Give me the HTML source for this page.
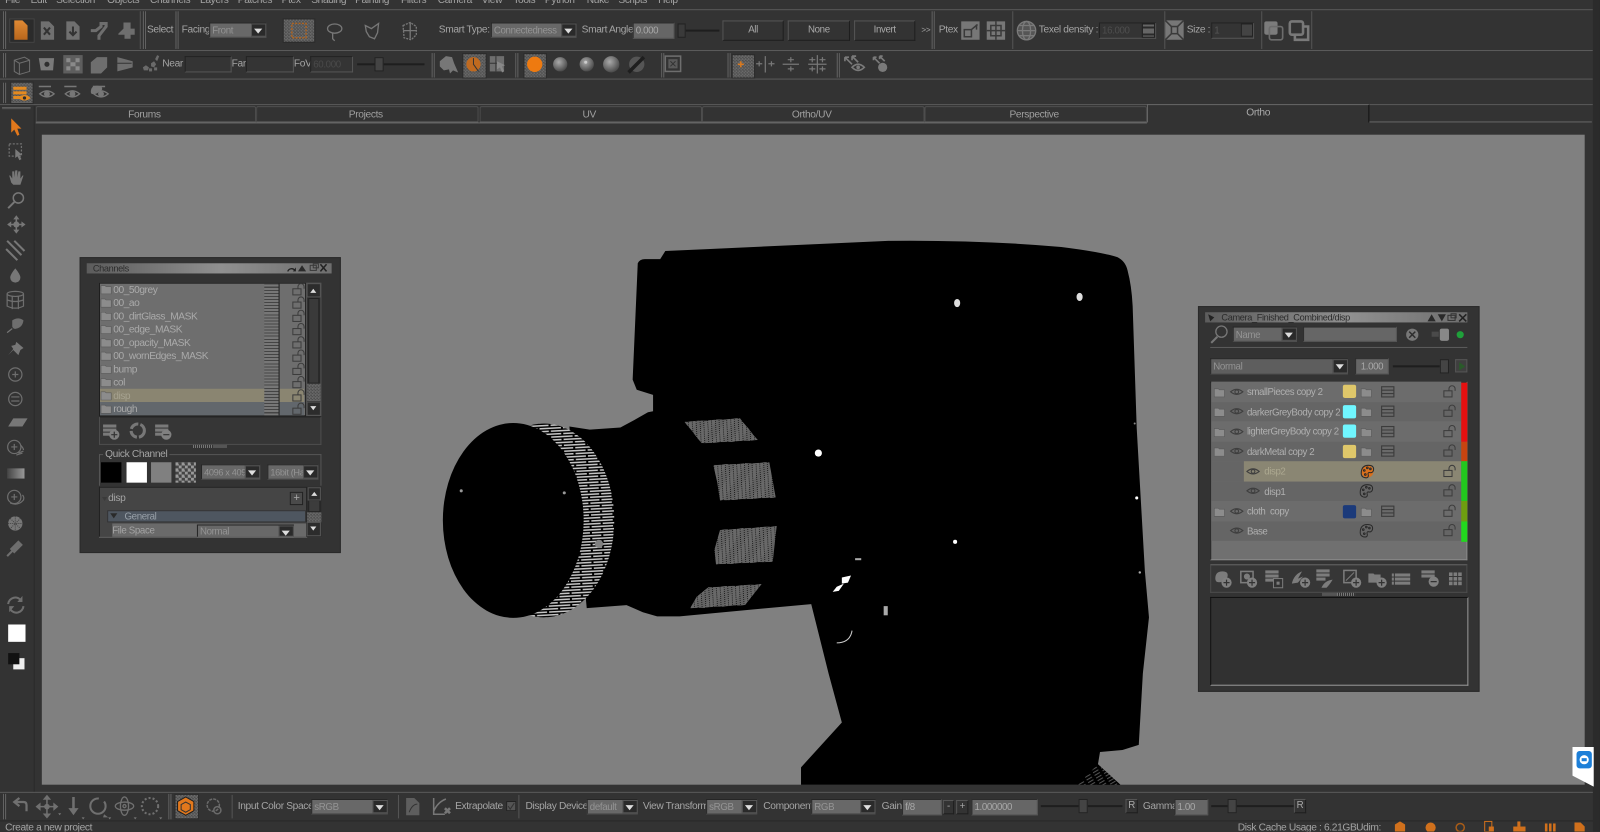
<!DOCTYPE html>
<html><head><meta charset="utf-8"><title>Mari</title>
<style>
html,body{margin:0;padding:0;width:1600px;height:832px;overflow:hidden;background:#333}
#r{position:absolute;left:0;top:0;width:1568px;height:815px;transform:scale(1.020408);transform-origin:0 0;background:#333;overflow:hidden;font:10px/14px "Liberation Sans",sans-serif;letter-spacing:-.35px;color:#a4a4a4;filter:blur(.35px)}
#r div,#r span{position:absolute;box-sizing:border-box;white-space:nowrap}
.h{height:1px;background:#5a5a5a;left:0;width:1561px}
.v{width:1px;background:#555}
.g{width:3px;border-left:1px solid #666;border-right:1px solid #666;background:#2a2a2a}
.tab{top:104px;height:16px;border:1px solid #4e4e4e;border-top-color:#555;border-bottom-color:#666;text-align:center;line-height:16px;font-size:10px;color:#a0a0a0;border-radius:2px 2px 0 0;text-indent:-3px}
.cb{background:#686868;border:1px solid #262626;border-bottom-color:#4d4d4d;border-right:0;color:#949494;font-size:9.5px;line-height:15px;padding-left:2px;overflow:hidden}
.cb i{position:absolute;right:0;top:0;bottom:0;width:13px;background:#2a2a2a;border:1px solid #555}
.cb i::after{content:"";position:absolute;left:2px;top:4px;border:4px solid transparent;border-top:5px solid #ddd;border-bottom:0}
.f{background:#343434;border:1px solid #232323;border-bottom-color:#565656;border-right-color:#565656;color:#555;font-size:9.5px;line-height:16px;padding-left:2px}
.n{background:#666;border:1px solid #2c2c2c;border-bottom-color:#555;border-right-color:#555;color:#a8a8a8;font-size:9.5px;line-height:16px;padding-left:2px}
.b{background:#333;border:1px solid #1f1f1f;border-top-color:#555;border-left-color:#555;text-align:center;line-height:18px;color:#aaa;font-size:9.5px}
.p{background:repeating-conic-gradient(#4f4f4f 0 25%,#6a6a6a 0 50%) 0 0/3px 3px;border:1px solid #2c2c2c}
.ti{background:linear-gradient(90deg,#5c5c5c,#909090 55%,#6e6e6e);height:10px;color:#2b2b2b;font-size:9px;line-height:11px}
.ch{left:111px;font-size:10px;color:#aaa;line-height:13px;letter-spacing:-.45px}
.st{left:259px;width:14px;background:repeating-linear-gradient(#444 0 1px,#777 1px 3px)}
.la{height:19.5px;left:1187px;width:245px;line-height:21px;font-size:9.5px;color:#b0b0b0;letter-spacing:-.4px}
.la span{top:0}
.s{width:13px;height:13px;left:1316px;border-radius:2px}
.bar{left:1432px;width:6px}
</style></head><body><div id="r">

<!-- horizontal structure -->
<div class="h" style="top:9px"></div>
<div class="h" style="top:49px"></div>
<div class="h" style="top:77px"></div>
<div class="h" style="top:102px"></div>
<div style="left:1561px;top:0;width:7px;height:815px;background:#2b2b2b"></div>

<!-- viewport -->
<div style="left:41px;top:132px;width:1512px;height:637px;background:#808080"></div>
<svg style="position:absolute;left:0;top:0" width="1568" height="815" viewBox="0 0 1568 815">
<defs>
<pattern id="st" width="46" height="5.8" patternUnits="userSpaceOnUse" patternTransform="rotate(-3)"><rect width="46" height="5.8" fill="#000"/><rect x="0" y="0" width="21" height="1.5" fill="#c4c4c4"/><rect x="23" y="0" width="21" height="1.5" fill="#c4c4c4"/><rect x="11" y="2.9" width="21" height="1.5" fill="#c4c4c4"/><rect x="34" y="2.900" width="12" height="1.5" fill="#c4c4c4"/><rect x="0" y="2.900" width="9" height="1.5" fill="#c4c4c4"/></pattern>
<pattern id="st2" width="9" height="3" patternUnits="userSpaceOnUse" patternTransform="rotate(-30)"><rect width="9" height="3" fill="#000"/><rect width="6" height="1" fill="#555"/></pattern>
</defs>
<path fill="#000" d="M625 258Q627 254 632 254L647 254L652 246Q760 241 870 236Q960 235 1040 242Q1080 247 1095 252Q1103 256 1105 265Q1109 280 1110 300L1114 420L1122 560L1126 605L1120 660L1116 730L1100 735L1078 737L1076 749L1098 769L785 769L785 752L825 708L812 660L795 592L666 604L644 604L630 600L614 593L575 596L558 418L578 421L608 419L621 412L635 404L640 403L640 387L624 382L620 372Z"/>
<path fill="url(#st2)" d="M1076 749L1098 769L1056 769Z"/>
<ellipse cx="533" cy="510" rx="69" ry="95" fill="url(#st)"/>
<ellipse cx="503" cy="510" rx="69" ry="95.5" fill="#000"/>
<circle cx="587" cy="533" r="4" fill="#808080"/>
<g transform="translate(421.4 382.2) scale(.3267)">
<g fill="url(#st)" transform="scale(3.061)">
<path transform="scale(.3267)" d="M763 95L930 85L983 150L815 160Z"/>
<path transform="scale(.3267)" d="M850 225L1018 217L1037 322L870 332L862 280Z"/>
<path transform="scale(.3267)" d="M870 420L1040 408L1028 515L858 523L853 480Z"/>
<path transform="scale(.3267)" d="M835 592L995 582L945 645L780 655L800 620Z"/>
</g></g>
<g fill="#fff">
<ellipse cx="802" cy="444" rx="3.5" ry="3.5"/><ellipse cx="938" cy="297" rx="3" ry="4" fill="#ddd"/><ellipse cx="1058" cy="291" rx="3" ry="4" fill="#ddd"/>
<circle cx="936" cy="531" r="2"/><circle cx="1114" cy="488" r="1.5"/><circle cx="1112" cy="415" r="1" fill="#888"/><circle cx="1117" cy="561" r="1.2" fill="#aaa"/>
<path d="M825 566L834 564L831 571L825 572Z"/><path d="M820 575L827 572L822 579L816 580Z"/><rect x="838" y="547" width="6" height="2" fill="#aaa"/>
<rect x="866" y="594" width="4" height="9" fill="#aaa"/>
</g>
<circle cx="452" cy="481" r="1.5" fill="#999"/><circle cx="553" cy="483" r="1.5" fill="#999"/>
<path d="M820 630Q833 630 835 618" stroke="#ccc" fill="none" stroke-width="1"/>
</svg>

<!-- teamviewer tab -->
<div style="left:1541px;top:732px;width:21px;height:39px;background:#fff;clip-path:polygon(0 0,100% 0,100% 100%,0 72%)"></div>
<div style="left:1545px;top:736px;width:15px;height:17px;background:#1d7fd8;border-radius:3px"></div>
<div style="left:1548px;top:740px;width:9px;height:9px;background:#fff;border-radius:50%"></div>
<div style="left:1550px;top:743px;width:5px;height:3px;background:#1d7fd8"></div>

<!-- menu -->
<span style="left:5px;top:-6px">File</span><span style="left:30px;top:-6px">Edit</span><span style="left:55px;top:-6px">Selection</span><span style="left:105px;top:-6px">Objects</span><span style="left:147px;top:-6px">Channels</span><span style="left:196px;top:-6px">Layers</span><span style="left:233px;top:-6px">Patches</span><span style="left:276px;top:-6px">Ptex</span><span style="left:305px;top:-6px">Shading</span><span style="left:348px;top:-6px">Painting</span><span style="left:393px;top:-6px">Filters</span><span style="left:429px;top:-6px">Camera</span><span style="left:472px;top:-6px">View</span><span style="left:503px;top:-6px">Tools</span><span style="left:534px;top:-6px">Python</span><span style="left:575px;top:-6px">Nuke</span><span style="left:606px;top:-6px">Scripts</span><span style="left:645px;top:-6px">Help</span>

<!-- row 1 -->
<div class="g" style="left:3px;top:11px;height:37px"></div>
<div style="left:9px;top:18px;width:25px;height:24px;background:#2b2b2b;border:1px solid #444"></div>
<div class="v" style="left:137px;top:11px;height:37px"></div><div class="g" style="left:140px;top:11px;height:37px"></div>
<span style="left:144px;top:23px">Select</span>
<div class="g" style="left:172px;top:11px;height:37px"></div>
<span style="left:178px;top:23px">Facing</span>
<div class="cb" style="left:205px;top:22px;width:56px;height:15px">Front<i></i></div>
<div class="p" style="left:277px;top:18px;width:32px;height:24px"></div>
<span style="left:430px;top:23px">Smart Type:</span>
<div class="cb" style="left:481px;top:22px;width:84px;height:15px">Connectedness<i></i></div>
<span style="left:570px;top:23px">Smart Angle</span>
<div class="n" style="left:620px;top:22px;width:41px;height:16px">0.000</div>
<div style="left:664px;top:29px;width:41px;height:2px;background:#1e1e1e"></div>
<div style="left:664px;top:23px;width:8px;height:14px;background:#3a3a3a;border:1px solid #222"></div>
<div class="b" style="left:708px;top:20px;width:60px;height:20px">All</div>
<div class="b" style="left:772px;top:20px;width:61px;height:20px">None</div>
<div class="b" style="left:837px;top:20px;width:60px;height:20px">Invert</div>
<span style="left:903px;top:23px;font-size:8px">&gt;&gt;</span>
<div class="g" style="left:913px;top:11px;height:37px"></div>
<span style="left:920px;top:23px">Ptex</span>
<div class="v" style="left:992px;top:11px;height:37px"></div>
<span style="left:1018px;top:23px">Texel density :</span>
<div class="f" style="left:1077px;top:22px;width:56px;height:16px;color:#4e4e4e">16.000</div>
<div style="left:1119px;top:23px;width:13px;height:14px;background:repeating-linear-gradient(#666 0 2px,#2a2a2a 2px 4px,#666 4px 7px);border:1px solid #222"></div>
<div class="v" style="left:1141px;top:11px;height:37px"></div>
<span style="left:1163px;top:23px">Size :</span>
<div class="f" style="left:1187px;top:22px;width:42px;height:16px">1</div>
<div style="left:1216px;top:23px;width:12px;height:13px;background:#444;border:1px solid #222"></div>
<div class="v" style="left:1236px;top:11px;height:37px"></div>
<div class="v" style="left:1285px;top:11px;height:37px"></div>

<!-- row 2 -->
<div class="g" style="left:3px;top:52px;height:24px"></div>
<span style="left:159px;top:56px">Near</span>
<div class="f" style="left:181px;top:55px;width:46px;height:16px"></div>
<span style="left:227px;top:56px">Far</span>
<div class="f" style="left:241px;top:55px;width:47px;height:16px"></div>
<span style="left:288px;top:56px">FoV</span>
<div class="f" style="left:304px;top:55px;width:42px;height:16px;color:#4a4a4a">60.000</div>
<div style="left:350px;top:62px;width:66px;height:2px;background:#1e1e1e"></div>
<div style="left:367px;top:56px;width:9px;height:14px;background:#444;border:1px solid #222"></div>
<div class="g" style="left:423px;top:52px;height:24px"></div>
<div class="p" style="left:453px;top:52px;width:24px;height:25px"></div>
<div class="g" style="left:505px;top:52px;height:24px"></div>
<div class="p" style="left:513px;top:52px;width:23px;height:25px"></div>
<div class="g" style="left:648px;top:52px;height:24px"></div>
<div class="g" style="left:713px;top:52px;height:24px"></div>
<div class="p" style="left:717px;top:53px;width:23px;height:24px"></div>
<div class="g" style="left:820px;top:52px;height:24px"></div>

<!-- row 3 -->
<div class="g" style="left:3px;top:81px;height:20px"></div>
<div class="p" style="left:10px;top:80px;width:23px;height:22px"></div>

<!-- left column -->
<div class="v" style="left:33px;top:104px;height:673px;background:#2a2a2a"></div>
<div style="left:2px;top:105px;width:28px;height:2px;border-top:1px solid #666;border-bottom:1px solid #555"></div>
<div style="left:8px;top:612px;width:17px;height:17px;background:#fff"></div>
<div style="left:8px;top:640px;width:11px;height:11px;background:#111;z-index:2"></div>
<div style="left:13px;top:645px;width:11px;height:11px;background:#eee"></div>

<!-- tabs -->
<div class="tab" style="left:35px;width:216px">Forums</div>
<div class="tab" style="left:251px;width:218px">Projects</div>
<div class="tab" style="left:470px;width:218px">UV</div>
<div class="tab" style="left:688px;width:218px">Ortho/UV</div>
<div class="tab" style="left:906px;width:218px">Perspective</div>
<div style="left:1124px;top:102px;width:218px;height:18px;border-top:1px solid #666;border-left:1px solid #666;border-right:1px solid #111;text-align:center;line-height:16px;font-size:10px;color:#aaa;background:#333">Ortho</div>
<div style="left:1342px;top:119px;width:218px;height:1px;background:#666"></div>
<div style="left:35px;top:120px;width:1089px;height:1px;background:#666"></div>

<!-- bottom -->
<div class="h" style="top:776px"></div>
<div class="h" style="top:804px;background:#272727"></div>
<div class="g" style="left:3px;top:778px;height:25px"></div>
<div class="g" style="left:165px;top:778px;height:25px"></div>
<div class="p" style="left:171px;top:778px;width:24px;height:25px"></div>
<div class="v" style="left:227px;top:779px;height:23px"></div>
<span style="left:233px;top:784px">Input Color Space</span>
<div class="cb" style="left:305px;top:783px;width:75px;height:15px">sRGB<i></i></div>
<div class="v" style="left:390px;top:779px;height:23px"></div>
<span style="left:446px;top:784px">Extrapolate</span>
<div style="left:496px;top:785px;width:10px;height:10px;background:#555;border:1px solid #222"></div>
<div class="v" style="left:508px;top:779px;height:23px"></div>
<span style="left:515px;top:784px">Display Device</span>
<div class="cb" style="left:575px;top:783px;width:50px;height:15px">default<i></i></div>
<span style="left:630px;top:784px">View Transform</span>
<div class="cb" style="left:692px;top:783px;width:50px;height:15px">sRGB<i></i></div>
<span style="left:748px;top:784px">Component</span>
<div class="cb" style="left:795px;top:783px;width:63px;height:15px">RGB<i></i></div>
<span style="left:864px;top:784px">Gain</span>
<div class="n" style="left:884px;top:783px;width:39px;height:16px">f/8</div>
<div class="b" style="left:924px;top:784px;width:11px;height:14px;line-height:12px">-</div>
<div class="b" style="left:937px;top:784px;width:12px;height:14px;line-height:12px">+</div>
<div class="n" style="left:952px;top:783px;width:65px;height:16px">1.000000</div>
<div style="left:1020px;top:789px;width:80px;height:2px;background:#1e1e1e"></div>
<div style="left:1057px;top:783px;width:9px;height:14px;background:#444;border:1px solid #222"></div>
<div class="b" style="left:1103px;top:783px;width:12px;height:14px;line-height:12px">R</div>
<span style="left:1120px;top:784px">Gamma</span>
<div class="n" style="left:1151px;top:783px;width:33px;height:16px">1.00</div>
<div style="left:1187px;top:789px;width:81px;height:2px;background:#1e1e1e"></div>
<div style="left:1203px;top:783px;width:9px;height:14px;background:#444;border:1px solid #222"></div>
<div class="b" style="left:1268px;top:783px;width:12px;height:14px;line-height:12px">R</div>
<span style="left:5px;top:805px">Create a new project</span>
<span style="left:1213px;top:805px">Disk Cache Usage : 6.21GB</span>
<span style="left:1329px;top:805px">Udim:</span>

<!-- channels panel -->
<div style="left:78px;top:252px;width:256px;height:290px;background:#333;border:1px solid #2a2a2a"></div>
<div class="ti" style="left:85px;top:258px;width:240px;padding-left:6px">Channels</div>
<div style="left:97px;top:277px;width:203px;height:131px;background:#6e6e6e;border:1px solid #1e1e1e"></div>
<div style="left:98px;top:381px;width:200px;height:13px;background:#8a8571"></div>
<div style="left:98px;top:394px;width:200px;height:13px;background:#62676c"></div>
<div class="st" style="top:278px;height:129px"></div>
<div style="left:273px;top:278px;width:1px;height:129px;background:#1e1e1e"></div>
<span class="ch" style="top:278px">00_50grey</span>
<span class="ch" style="top:291px">00_ao</span>
<span class="ch" style="top:304px">00_dirtGlass_MASK</span>
<span class="ch" style="top:317px">00_edge_MASK</span>
<span class="ch" style="top:330px">00_opacity_MASK</span>
<span class="ch" style="top:343px">00_wornEdges_MASK</span>
<span class="ch" style="top:356px">bump</span>
<span class="ch" style="top:369px">col</span>
<span class="ch" style="top:382px;color:#a6a290">disp</span>
<span class="ch" style="top:395px">rough</span>
<div style="left:300px;top:277px;width:15px;height:131px;background:#2c2c2c;border:1px solid #555"></div>
<div style="left:302px;top:292px;width:11px;height:84px;background:#3a3a3a;border:1px solid #222"></div>
<div class="p" style="left:301px;top:376px;width:13px;height:17px;border:0"></div>
<div style="left:97px;top:408px;width:218px;height:28px;border:1px solid #4e4e4e;border-top-color:#1e1e1e;background:#363636"></div>
<div style="left:189px;top:436px;width:33px;height:3px;background:repeating-linear-gradient(90deg,#777 0 1px,#333 1px 2px)"></div>
<div style="left:97px;top:445px;width:218px;height:31px;border:1px solid #555;border-bottom:0"></div>
<span style="left:101px;top:439px;background:#333;padding:0 2px">Quick Channel</span>
<div style="left:99px;top:453px;width:20px;height:20px;background:#000"></div>
<div style="left:124px;top:453px;width:20px;height:20px;background:#fff"></div>
<div style="left:148px;top:453px;width:20px;height:20px;background:#808080"></div>
<div style="left:172px;top:453px;width:20px;height:20px;background:repeating-conic-gradient(#444 0 25%,#999 0 50%) 0 0/6px 6px"></div>
<div class="cb" style="left:197px;top:455px;width:58px;height:15px;font-size:9px">4096 x 4096<i></i></div>
<div class="cb" style="left:262px;top:455px;width:50px;height:15px;font-size:9px">16bit (Half)<i></i></div>
<div style="left:97px;top:477px;width:204px;height:50px;background:#454545;border:1px solid #222;overflow:hidden"></div>
<span style="left:106px;top:482px">disp</span>
<div style="left:284px;top:482px;width:13px;height:13px;background:#4a4a4a;border:1px solid #222;text-align:center;line-height:11px;font-size:11px;color:#aaa">+</div>
<div style="left:105px;top:500px;width:195px;height:12px;background:#4e5660;border:1px solid #333;line-height:11px;font-size:9.5px;padding-left:16px;color:#98a0a8">General</div>
<div style="left:110px;top:513px;width:190px;height:13px;background:#6a6a6a;line-height:16px;font-size:9.5px;overflow:hidden;color:#a4a4a4">File Space</div>
<div class="cb" style="left:193px;top:514px;width:95px;height:13px;line-height:13px">Normal<i></i></div>
<div style="left:97px;top:526px;width:218px;height:1px;background:#666"></div>
<div style="left:301px;top:477px;width:14px;height:50px;background:#2c2c2c"></div>
<div style="left:302px;top:490px;width:12px;height:12px;background:#3c3c3c;border:1px solid #222"></div>
<div class="p" style="left:301px;top:502px;width:14px;height:10px;border:0"></div>

<!-- layers panel -->
<div style="left:1174px;top:300px;width:276px;height:378px;background:#333;border:1px solid #2a2a2a"></div>
<div class="ti" style="left:1181px;top:306px;width:257px;padding-left:16px">Camera_Finished_Combined/disp</div>
<div class="cb" style="left:1208px;top:320px;width:63px;height:15px;background:#666">Name<i></i></div>
<div class="n" style="left:1277px;top:320px;width:92px;height:15px"></div>
<div style="left:1186px;top:340px;width:252px;height:1px;background:#5c5c5c"></div>
<div class="cb" style="left:1186px;top:351px;width:135px;height:16px;background:#5e5e5e;line-height:15px">Normal<i></i></div>
<div class="n" style="left:1328px;top:351px;width:33px;height:16px;line-height:16px;text-align:center;padding:0">1.000</div>
<div style="left:1365px;top:358px;width:52px;height:2px;background:#1e1e1e"></div>
<div style="left:1411px;top:352px;width:9px;height:14px;background:#444;border:1px solid #222"></div>
<div style="left:1426px;top:352px;width:12px;height:13px;background:#3f3f3f;border:1px solid #555"></div>
<div style="left:1186px;top:374px;width:252px;height:175px;background:#707070;border:1px solid #222;border-right-color:#888;border-bottom-color:#888"></div>
<div class="la" style="top:374px;background:#6c6c6c"><span style="left:35px">smallPieces copy 2</span></div>
<div class="la" style="top:393.5px;background:#656565"><span style="left:35px">darkerGreyBody copy 2</span></div>
<div class="la" style="top:413px;background:#6c6c6c"><span style="left:35px">lighterGreyBody copy 2</span></div>
<div class="la" style="top:432.5px;background:#656565"><span style="left:35px">darkMetal copy 2</span></div>
<div class="la" style="top:452px;background:#656565"></div>
<div class="la" style="top:452px;left:1219px;width:213px;background:#8a8673"><span style="left:20px;color:#aca890">disp2</span></div>
<div class="la" style="top:471.5px;background:#656565"><span style="left:52px">disp1</span></div>
<div class="la" style="top:491px;background:#6c6c6c"><span style="left:35px">cloth&nbsp; copy</span></div>
<div class="la" style="top:510.5px;background:#656565"><span style="left:35px">Base</span></div>
<div class="s" style="top:377px;background:#dfc76a"></div>
<div class="s" style="top:397px;background:#70f6ff"></div>
<div class="s" style="top:416px;background:#70f6ff"></div>
<div class="s" style="top:436px;background:#dfc76a"></div>
<div class="s" style="top:495px;background:#1b3a7a"></div>
<div class="bar" style="top:375px;height:58px;background:#e61010"></div>
<div class="bar" style="top:433px;height:19px;background:#c84410"></div>
<div class="bar" style="top:452px;height:39px;background:#22c81e"></div>
<div class="bar" style="top:491px;height:20px;background:#6e9e10"></div>
<div class="bar" style="top:511px;height:20px;background:#22d81e"></div>
<div style="left:1186px;top:553px;width:252px;height:28px;background:#363636;border:1px solid #4c4c4c;border-top-color:#666"></div>
<div style="left:1296px;top:581px;width:32px;height:3px;background:repeating-linear-gradient(90deg,#777 0 1px,#333 1px 2px)"></div>
<div style="left:1186px;top:585px;width:253px;height:87px;background:#313131;border:1px solid #999;border-top-color:#111;border-left-color:#111"></div>

<!-- icons overlay -->
<svg style="position:absolute;left:0;top:0" width="1568" height="815" viewBox="0 0 1568 815">
<defs>
<linearGradient id="og" x1="0" y1="0" x2="0" y2="1"><stop offset="0" stop-color="#e08a34"/><stop offset="1" stop-color="#b8661c"/></linearGradient>
<radialGradient id="sph" cx=".4" cy=".35" r=".7"><stop offset="0" stop-color="#aaa"/><stop offset="1" stop-color="#444"/></radialGradient>
<g id="eye" fill="none" stroke="#3f3f3f" stroke-width="1.100"><path d="M-6 0Q0-5 6 0Q0 5-6 0Z"/><circle r="1.800" fill="none"/></g>
<g id="eye2" fill="none" stroke="#777" stroke-width="1.400"><path d="M-7 2Q0-4 7 2Q0 8-7 2Z"/><circle cy="2" r="2.200" fill="#777"/><rect x="-8" y="-6" width="12" height="1.500" fill="#777" stroke="none"/></g>
<g id="lock" fill="none" stroke="#3c3c3c" stroke-width="1"><rect x="-6" y="-1" width="8" height="6"/><path d="M-1-1V-3a3 3 0 0 1 6 0v2"/></g>
<path id="fold" fill="#8c8c8c" stroke="#5a5a5a" stroke-width=".6" d="M-5-4h4l1 1h5v7h-10z"/>
<g id="list" fill="none" stroke="#3c3c3c" stroke-width="1.100"><rect x="-6" y="-5" width="12" height="10" fill="#6a6a6a"/><path d="M-6-1.600H6M-6 1.700H6"/></g>
<g id="pal" fill="none" stroke="#2a2a2a" stroke-width="1"><path d="M-6 2Q-6-6 1-6Q7-6 6-1Q5 2 2 1Q0 1 1 4Q1 7-3 6Q-6 5-6 2Z"/><circle cx="-3" cy="-1" r=".8"/><circle cx="0" cy="-3.500" r=".8"/><circle cx="3" cy="-2.500" r=".8"/><circle cx="-2" cy="3" r=".8"/></g>
<g id="plus"><circle r="5" fill="#808080"/><path d="M-3 0H3M0-3V3" stroke="#333" stroke-width="1.200"/></g>
<g id="minus"><circle r="5" fill="#808080"/><path d="M-3 0H3" stroke="#333" stroke-width="1.200"/></g>
<g id="stack" fill="#7a7a7a"><rect x="-9" y="-8" width="13" height="3"/><rect x="-9" y="-4" width="13" height="3"/><rect x="-9" y="0" width="13" height="3"/></g>
</defs>

<!-- row1 -->
<path fill="url(#og)" d="M14 20h8l5 5v14H14z"/>
<g fill="#707070"><path d="M40 21h8l5 5v13H40z"/><path d="M65 21h8l5 5v13H65z"/></g>
<path stroke="#333" stroke-width="2" fill="none" d="M43 27l6 7M49 27l-6 7M71.500 26v8M68 31l3.500 3.500 3.500-3.500"/>
<path fill="none" stroke="#6e6e6e" stroke-width="3" d="M89 30h5l5-4v-3h5v3l-7 9v4"/>
<path fill="#6e6e6e" d="M116 33l5-5v-6h7v6h4v6h-4v4h-6v-4h-6z"/>
<g fill="none" stroke="#b06420" stroke-width="1.400" stroke-dasharray="2 1.300"><rect x="286" y="23" width="14" height="14"/></g>
<g fill="none" stroke="#777" stroke-width="1.300">
<ellipse cx="328" cy="28" rx="7" ry="4.500"/><path d="M326 32v6l2 2"/>
<path d="M358 25l6 3 7-5-1 9-3 6-5-2-3-5z"/>
<path d="M395 25l7-3 6 4 0 8-5 5-7-2z" stroke-dasharray="2 1"/><path d="M402 22v16M395 30h13"/>
</g>
<g fill="#777">
<path d="M942 21h18v18h-18z"/><path d="M967 21h18v18h-18z"/>
<path d="M1142 20h18v19h-18z"/>
</g>
<g fill="none" stroke="#3a3a3a" stroke-width="1.500"><path d="M945 36v-7h7v7zM952 29l6-5M957 24v5"/><path d="M976 21v18M967 30h18M971 25h10v10h-10z"/><path d="M1142 20l6 6M1160 20l-6 6M1142 39l6-6M1160 39l-6-6"/><rect x="1148" y="26" width="6" height="7"/></g>
<g fill="none" stroke="#7a7a7a" stroke-width="1.300"><circle cx="1006" cy="30" r="9" fill="#555"/><ellipse cx="1006" cy="30" rx="4" ry="9"/><path d="M997 30h18M998 25h16M998 35h16"/></g>
<g fill="#7c7c7c"><rect x="1239" y="21" width="13" height="13" rx="2"/></g><rect x="1244" y="26" width="13" height="13" rx="2" fill="none" stroke="#6c6c6c" stroke-width="1.600"/>
<rect x="1264" y="21" width="13" height="13" rx="2" fill="none" stroke="#777" stroke-width="2.500"/><path d="M1277 26h5v13h-13v-5" fill="none" stroke="#7a7a7a" stroke-width="2.500"/>

<!-- row2 -->
<g fill="none" stroke="#6e6e6e" stroke-width="1"><path d="M14 59l10-3 5 3v11l-10 3-5-3zM14 59l5 3v11M19 62l10-3"/></g>
<path fill="#7a7a7a" d="M38 57h15l-1 12H40z"/><circle cx="46" cy="63" r="2.500" fill="#2f2f2f"/>
<rect x="62" y="54" width="19" height="18" fill="#5e5e5e"/><g fill="#8a8a8a"><rect x="65" y="57" width="4" height="4"/><rect x="74" y="57" width="4" height="4"/><rect x="65" y="65" width="4" height="4"/><rect x="74" y="65" width="4" height="4"/><rect x="69" y="61" width="5" height="4"/></g>
<path fill="#6e6e6e" d="M89 61l6-5h10v10l-6 6H89z"/>
<path fill="#6e6e6e" d="M115 56l15 4v6l-15 4z"/><path d="M115 62h14" stroke="#333"/>
<g fill="#6a6a6a"><path d="M140 66l3-2 3 2-1 3-4 0zM148 62l3-2 2 3-2 3-3-1z"/><path d="M152 58l2-4 2 1-2 5z"/><rect x="146" y="67" width="3" height="3"/><rect x="151" y="66" width="3" height="3"/></g>
<path fill="#777" d="M431 60l6-5 6 1 2 6 4 9-5-2-3 3-1-4-5 1-4-4z"/>
<circle cx="464" cy="63" r="7" fill="#c06a20"/><path d="M464 57v6l5 7" stroke="#333" fill="none"/>
<g fill="#6e6e6e"><rect x="480" y="55" width="14" height="15"/></g><path d="M486 55v15M480 62h7" stroke="#333"/><path d="M487 60l8 4-3 1 2 5-2 1-2-5-3 2z" fill="#888"/>
<circle cx="524" cy="63" r="7.500" fill="#ee7a10"/>
<circle cx="549" cy="63" r="7" fill="url(#sph)"/><circle cx="575" cy="63" r="7" fill="url(#sph)"/><circle cx="574" cy="61" r="1.500" fill="#ccc"/><circle cx="599" cy="63" r="8" fill="url(#sph)"/>
<circle cx="624" cy="63" r="7.500" fill="#555"/><path d="M616 71l15-15" stroke="#1e1e1e" stroke-width="3.500"/>
<rect x="652" y="55" width="15" height="15" fill="none" stroke="#6e6e6e" stroke-width="1.500"/><rect x="655" y="58" width="9" height="9" fill="#5a5a5a"/><path d="M657 60l5 5M662 60l-5 5" stroke="#333"/>
<path d="M726 60v6M723 63h6" stroke="#d97a20" stroke-width="1.500"/>
<g stroke="#777" stroke-width="1.200"><path d="M750 55v16M744 60v5M741 62.500h6M756 60v5M753 62.500h6"/><path d="M767 63h16M775 56v5M772 58.500h6M775 65v5M772 67.500h6"/><path d="M801 54v18M792 63h18M796 56v5M793 58.500h6M806 56v5M803 58.500h6M796 65v5M793 67.500h6M806 65v5M803 67.500h6"/></g>
<g fill="none" stroke="#7a7a7a" stroke-width="1.600"><path d="M828 56l7 7M828 56h4M828 56v4M835 55l6 6M835 55h4M835 55v4M856 56l6 6M856 56h3M856 56v3M862 55l5 5M862 55h3M862 55v3"/><path d="M835 66Q841 60 847 66Q841 72 835 66Z"/></g><circle cx="865" cy="66" r="4.500" fill="#7a7a7a"/><circle cx="841" cy="66" r="1.800" fill="#7a7a7a"/>

<!-- row3 -->
<g fill="#e48a20"><rect x="13" y="85" width="13" height="3"/><rect x="13" y="89.500" width="13" height="3"/><rect x="13" y="94" width="8" height="3"/></g>
<path d="M18 96Q24 90 30 96Q24 101 18 96Z" fill="#e48a20"/><circle cx="24" cy="96" r="1.600" fill="#2c2c2c"/>
<use href="#eye2" x="46" y="90"/><use href="#eye2" x="71" y="90"/>
<path fill="#777" d="M89 90q0-6 6-6q6 0 5 4l-3 2q-2 2-4 2q-4 1-4-2z"/><use href="#eye2" x="99" y="90"/>

<!-- left tools -->
<path fill="#e2781c" d="M11 116v14l3-3 3 6 2-1-2-6h4z"/>
<rect x="9" y="141" width="12" height="12" fill="none" stroke="#707070" stroke-dasharray="2 1.500" stroke-width="1.200"/><path fill="#7a7a7a" d="M15 146v9l2-2 2 4 2-1-2-4h3z"/>
<path fill="#777" d="M11 179l-2-7 1 0 2 3 0-7 2 0 0 6 1-7 2 0 0 7 1-6 2 0 0 7 2-3 1 0-3 9h-7z"/>
<g fill="none" stroke="#777" stroke-width="1.500"><circle cx="18" cy="194" r="5"/><path d="M14 198l-6 6" stroke-width="2"/></g>
<g fill="none" stroke="#777" stroke-width="1.500"><path d="M16 212v16M8 220h16"/></g><path fill="#777" d="M16 211l3 4h-6zM16 229l3-4h-6zM7 220l4-3v6zM25 220l-4-3v6z"/><circle cx="16" cy="220" r="3" fill="#777"/>
<g fill="none" stroke="#777" stroke-width="2"><path d="M7 236l14 14M6 244l11 11M14 236l10 10"/></g>
<path fill="#777" d="M15 263q5 6 5 9a5 5 0 0 1-10 0q0-3 5-9z"/>
<g fill="none" stroke="#6e6e6e" stroke-width="1.200"><ellipse cx="15" cy="288" rx="8" ry="2.500"/><path d="M7 288v12q8 4 16 0V288M7 294q8 3 16 0M12 290v13M18 290v13"/></g>
<path fill="#6e6e6e" d="M12 314q6-4 11 0q-1 7-7 8q-3 1-4-2zM11 322l-4 4"/><path d="M12 322l-5 4" stroke="#777" stroke-width="1.200"/>
<path fill="#777" d="M16 335l7 6-3 2-2 5-5-5-5 5 5-6-2-3 4-1z"/>
<g fill="none" stroke="#6e6e6e" stroke-width="1.200"><circle cx="15" cy="367" r="6.500"/><path d="M12 367h6M15 364v6"/><circle cx="15" cy="391" r="6.500"/><path d="M11 389h8M11 393h8"/></g>
<path fill="#777" d="M13 410h14l-5 8H8z"/>
<g fill="none" stroke="#6e6e6e" stroke-width="1.200"><circle cx="14" cy="438" r="6.500"/><path d="M11 438h6M14 435v6M18 444l5-2M16 446l6-2M20 436q3 3 3 5"/></g>
<defs><linearGradient id="gr" x1="0" x2="1"><stop offset="0" stop-color="#444"/><stop offset="1" stop-color="#999"/></linearGradient></defs>
<rect x="7" y="459" width="17" height="10" fill="url(#gr)"/>
<g fill="none" stroke="#6e6e6e" stroke-width="1.200"><circle cx="14" cy="487" r="6.500"/><path d="M11 487h6M14 484v6M10 493q8 3 13-3 1-3-1-5"/></g>
<circle cx="15" cy="513" r="7" fill="#777"/><path d="M8 513h14M15 506v14M10 508l10 10M20 508l-10 10" stroke="#444" stroke-dasharray="1 1"/>
<path d="M7 545l5-5M11 538l7-7 3 3-7 7zM18 531l3 3" stroke="#6e6e6e" stroke-width="2" fill="#6e6e6e"/>
<g fill="none" stroke="#6e6e6e" stroke-width="2"><path d="M8 592a7 7 0 0 1 13-3M23 594a7 7 0 0 1-13 3"/></g><path fill="#6e6e6e" d="M22 584v6h-5zM9 600v-6h5z"/>

<!-- bottom tools -->
<g fill="none" stroke="#707070" stroke-width="2.200"><path d="M26 795v-6q0-3-3-3H15"/><path d="M19 782l-5 4 5 4"/></g>
<g stroke="#707070" stroke-width="1.500" fill="#707070"><path d="M46 782v17M38 790.500h16"/><circle cx="46" cy="790.500" r="2"/><path d="M46 780l2.500 3h-5zM46 801l2.500-3h-5zM36 790.500l3-2.500v5zM56 790.500l-3-2.500v5z"/></g>
<path d="M72 781v14" stroke="#707070" stroke-width="2.500"/><path fill="#707070" d="M67 792h10l-5 7z"/>
<circle cx="96" cy="790" r="7.500" fill="none" stroke="#707070" stroke-width="2" stroke-dasharray="36 6"/><path fill="#707070" d="M102 798l4 3-5 0z"/>
<g fill="none" stroke="#707070" stroke-width="1.300"><ellipse cx="122" cy="790" rx="9" ry="4"/><ellipse cx="122" cy="790" rx="4" ry="9"/><circle cx="122" cy="790" r="1.500"/></g>
<circle cx="147" cy="790" r="8" fill="none" stroke="#707070" stroke-width="2" stroke-dasharray="2 2"/>
<g fill="#777"><path d="M57 797h3l-1.500 2zM80 801h3l-1.500 2zM106 801h3l-1.500 2zM131 801h3l-1.500 2zM156 801h3l-1.500 2z"/></g>
<path fill="#e2781c" stroke="#1e1e1e" d="M182 781l8 4.500v9l-8 4.500-8-4.500v-9z"/><path fill="none" stroke="#333" d="M182 786l4.500 2.500v5L182 796l-4.500-2.500v-5z"/>
<g fill="none" stroke="#6a6a6a" stroke-width="1.500"><circle cx="209" cy="789" r="6" stroke-dasharray="3 1"/><circle cx="213" cy="794" r="3.500"/></g>
<path fill="#5e5e5e" d="M398 782h8l5 5v12h-13z"/><path d="M401 796q3-8 8-8" stroke="#333" fill="none"/>
<g fill="none" stroke="#777" stroke-width="1.500"><path d="M425 782v16h11M425 795q4-9 12-12"/></g><path d="M436 792l5 5M441 792l-5 5" stroke="#777" stroke-width="2.500"/>
<path d="M498 790l2 3 4-6" stroke="#333" fill="none"/>

<!-- status icons -->
<g fill="#d0701c">
<path d="M1372 805l5 3v7h-10v-7z"/><circle cx="1402" cy="811" r="5"/><circle cx="1431" cy="811" r="4" fill="none" stroke="#a85c18" stroke-width="1.500"/>
<rect x="1455" y="805" width="7" height="10" fill="none" stroke="#d0701c"/><rect x="1459" y="810" width="5" height="5"/>
<rect x="1483" y="810" width="12" height="5"/><rect x="1487" y="805" width="3" height="5"/>
<rect x="1514" y="807" width="2.500" height="8"/><rect x="1518" y="807" width="2.500" height="8"/><rect x="1522" y="807" width="2.500" height="8"/>
<path d="M1543 806h6l4 4v5h-10z"/>
</g>

<!-- channels panel icons -->
<path d="M282 266a4 4 0 0 1 7-1" fill="none" stroke="#222" stroke-width="1.300"/><path d="M290 262v4h-3z" fill="#222"/>
<path d="M292 266l4-6 4 6z" fill="#2a2a2a"/>
<rect x="304" y="260" width="6" height="5" fill="none" stroke="#3a3a3a"/><rect x="307" y="258.500" width="5" height="4" fill="none" stroke="#3a3a3a"/>
<path d="M314 259l6 7M320 259l-6 7" stroke="#222" stroke-width="1.500"/>
<g><use href="#fold" x="104" y="284"/><use href="#fold" x="104" y="297"/><use href="#fold" x="104" y="310"/><use href="#fold" x="104" y="323"/><use href="#fold" x="104" y="336"/><use href="#fold" x="104" y="349"/><use href="#fold" x="104" y="362"/><use href="#fold" x="104" y="375"/><use href="#fold" x="104" y="388"/><use href="#fold" x="104" y="401"/></g>
<g><use href="#lock" x="293" y="284"/><use href="#lock" x="293" y="297"/><use href="#lock" x="293" y="310"/><use href="#lock" x="293" y="323"/><use href="#lock" x="293" y="336"/><use href="#lock" x="293" y="349"/><use href="#lock" x="293" y="362"/><use href="#lock" x="293" y="375"/><use href="#lock" x="293" y="388"/><use href="#lock" x="293" y="401"/></g>
<rect x="301" y="394" width="13" height="13" fill="#2c2c2c" stroke="#555"/><path d="M304 398h6l-3 4z" fill="#ddd"/>
<rect x="301" y="278" width="13" height="13" fill="#2c2c2c" stroke="#555"/><path d="M304 287h6l-3-4z" fill="#ddd"/>
<use href="#stack" x="110" y="424"/><g transform="translate(112 426)"><use href="#plus"/></g>
<circle cx="135" cy="422" r="6.500" fill="none" stroke="#777" stroke-width="3" stroke-dasharray="9 2"/>
<use href="#stack" x="161" y="424"/><g transform="translate(163 426)"><use href="#minus"/></g>
<path d="M100 487l5 0-2.500 4z" fill="#3a3a3a"/>
<path d="M108 503l7 0-3.500 5z" fill="#2a2a2a"/>
<rect x="302" y="478" width="12" height="12" fill="#2c2c2c" stroke="#555"/><path d="M305 486l3-4 3 4z" fill="#ddd"/>
<rect x="301" y="512" width="13" height="13" fill="#2c2c2c" stroke="#555"/><path d="M304 516h6l-3 4z" fill="#ddd"/>

<!-- layers icons -->
<path d="M1184 308l6 3-4 4z" fill="#222"/>
<path d="M1399 315l4-7 4 7z" fill="#2a2a2a"/><path d="M1409 308l4 7 4-7z" fill="#2a2a2a"/>
<rect x="1419" y="309" width="7" height="5" fill="none" stroke="#333"/><rect x="1422" y="307.500" width="5" height="4" fill="none" stroke="#333"/>
<path d="M1430 308l7 7M1437 308l-7 7" stroke="#222" stroke-width="1.500"/>
<g fill="none" stroke="#777" stroke-width="1.300"><circle cx="1197" cy="325" r="5.500"/><path d="M1193 330l-6 6" stroke-width="2"/></g>
<circle cx="1384" cy="328" r="6" fill="#777"/><path d="M1381 325l6 6M1387 325l-6 6" stroke="#2d2d2d" stroke-width="1.500"/>
<rect x="1403" y="325" width="7" height="5" fill="#4a4a4a"/><rect x="1411" y="322" width="9" height="12" rx="2" fill="#888"/>
<circle cx="1431" cy="328" r="3.500" fill="#1fa03a"/>
<path d="M1430 355l6 4-6 4z" fill="#2a5a2a"/>
<g><use href="#fold" x="1195" y="385"/><use href="#fold" x="1195" y="404"/><use href="#fold" x="1195" y="424"/><use href="#fold" x="1195" y="443"/><use href="#fold" x="1195" y="502"/></g>
<g><use href="#fold" x="1339" y="385"/><use href="#fold" x="1339" y="404"/><use href="#fold" x="1339" y="424"/><use href="#fold" x="1339" y="443"/><use href="#fold" x="1339" y="502"/></g>
<g><use href="#eye" x="1212" y="384"/><use href="#eye" x="1212" y="403"/><use href="#eye" x="1212" y="423"/><use href="#eye" x="1212" y="442"/><use href="#eye" x="1228" y="462"/><use href="#eye" x="1228" y="481"/><use href="#eye" x="1212" y="501"/><use href="#eye" x="1212" y="520"/></g>
<g><use href="#list" x="1360" y="384"/><use href="#list" x="1360" y="403"/><use href="#list" x="1360" y="423"/><use href="#list" x="1360" y="442"/><use href="#list" x="1360" y="501"/></g>
<g><use href="#lock" x="1421" y="384"/><use href="#lock" x="1421" y="403"/><use href="#lock" x="1421" y="423"/><use href="#lock" x="1421" y="442"/><use href="#lock" x="1421" y="462"/><use href="#lock" x="1421" y="481"/><use href="#lock" x="1421" y="501"/><use href="#lock" x="1421" y="520"/></g>
<circle cx="1340" cy="462" r="6" fill="#d9701c"/><use href="#pal" x="1340" y="462"/><use href="#pal" x="1339" y="481"/><use href="#pal" x="1339" y="520"/>

<g fill="#7c7c7c">
<path d="M1191 567q0-7 7-7q6 0 5 5t-5 5q-7 2-7-3z"/>
<rect x="1216" y="560" width="12" height="11" fill="none" stroke="#7c7c7c" stroke-width="1.500"/><circle cx="1222" cy="565" r="3"/>
<rect x="1240" y="559" width="13" height="3"/><rect x="1240" y="563" width="13" height="3"/><rect x="1240" y="567" width="9" height="3"/><rect x="1248" y="567" width="9" height="9" fill="#333" stroke="#7c7c7c"/><rect x="1251" y="570" width="3" height="3"/>
<path d="M1266 572q2-9 10-12l-4 7 5-2-5 6z"/>
<rect x="1290" y="558" width="13" height="3"/><rect x="1290" y="562" width="13" height="3"/><rect x="1290" y="566" width="9" height="3"/><path d="M1295 576q3-7 11-8q-3 5-6 8z"/>
<rect x="1317" y="559" width="12" height="12" fill="none" stroke="#7c7c7c" stroke-width="1.500"/><path d="M1319 569l8-8" stroke="#7c7c7c"/>
<path d="M1341 562h5l1 1h6v8h-12z"/>
<rect x="1367" y="562" width="15" height="3"/><rect x="1367" y="566" width="15" height="3"/><rect x="1367" y="570" width="15" height="3"/><rect x="1364" y="562" width="2" height="3"/><rect x="1364" y="566" width="2" height="3"/><rect x="1364" y="570" width="2" height="3"/>
<rect x="1393" y="559" width="13" height="3"/><rect x="1393" y="563" width="13" height="3"/>
<rect x="1420" y="561" width="3.500" height="3.500"/><rect x="1424.500" y="561" width="3.500" height="3.500"/><rect x="1429" y="561" width="3.500" height="3.500"/><rect x="1420" y="565.500" width="3.500" height="3.500"/><rect x="1424.500" y="565.500" width="3.500" height="3.500"/><rect x="1429" y="565.500" width="3.500" height="3.500"/><rect x="1420" y="570" width="3.500" height="3.500"/><rect x="1424.500" y="570" width="3.500" height="3.500"/><rect x="1429" y="570" width="3.500" height="3.500"/>
</g>
<g><use href="#plus" x="1202" y="571"/><use href="#plus" x="1227" y="571"/><use href="#plus" x="1279" y="571"/><use href="#plus" x="1329" y="571"/><use href="#plus" x="1354" y="571"/><use href="#minus" x="1405" y="570"/></g>
</svg>
</div></body></html>
